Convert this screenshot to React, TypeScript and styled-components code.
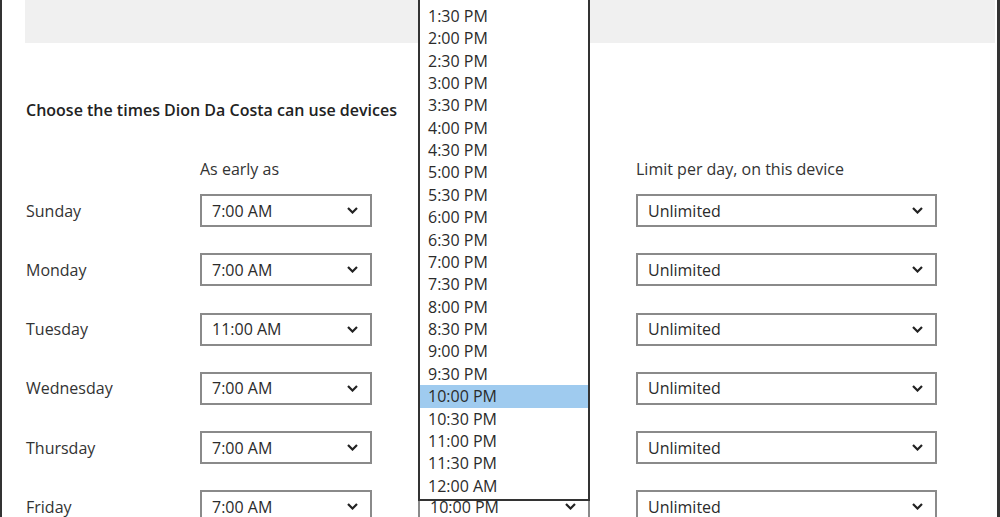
import React from "react";
import styled, { createGlobalStyle } from "styled-components";

const Global = createGlobalStyle`
  html, body { margin: 0; padding: 0; background: #fff; }
  body { font-family: "Open Sans", "Noto Sans", "Liberation Sans", sans-serif; color: #2b2b2b; }
  * { box-sizing: border-box; }
`;

const Frame = styled.div`
  position: relative;
  width: 1000px;
  height: 517px;
  overflow: hidden;
  border-left: 2px solid #333;
  border-right: 3px solid #333;
  background: #fff;
`;

const Band = styled.div`
  margin-left: 23px;
  margin-right: 2px;
  height: 43px;
  background: #f0f0f0;
`;

const Content = styled.div`
  padding-left: 24px;
`;

const Title = styled.h2`
  margin: 57px 0 0 0;
  font-size: 16px;
  line-height: 20px;
  font-weight: 600;
  color: #222;
`;

const Grid = styled.div<{ $gapBelow: number; $h: number; $gapAbove?: number }>`
  display: grid;
  grid-template-columns: 128px 172px 172px 301px;
  column-gap: 46px;
  align-items: center;
  height: ${(p) => p.$h}px;
  margin-top: ${(p) => p.$gapAbove ?? 0}px;
  margin-bottom: ${(p) => p.$gapBelow}px;
`;

const ColLabel = styled.div`
  font-size: 16px;
  line-height: 20px;
  color: #333;
  white-space: nowrap;
`;

const Day = styled.div`
  font-size: 16px;
  line-height: 20px;
  color: #333;
`;

const SelectBox = styled.div`
  display: flex;
  align-items: center;
  justify-content: space-between;
  height: 33px;
  border: 2px solid #8a8a8a;
  background: #fff;
  padding: 0 12px 0 10px;
  font-size: 16px;
  color: #2b2b2b;
`;

const Chevron = () => (
  <svg width="11" height="7" viewBox="0 0 11 7">
    <polyline points="1,1 5.5,5.5 10,1" fill="none" stroke="#222" strokeWidth="2.2" />
  </svg>
);

const ListBox = styled.div`
  position: absolute;
  left: 416px;
  top: -10px;
  width: 172px;
  height: 511px;
  border: 2px solid #333;
  background: #fff;
  padding-top: 12.8px;
  overflow: hidden;
`;

const Item = styled.div<{ $selected?: boolean }>`
  height: 22.38px;
  line-height: 22.38px;
  padding-left: 8px;
  font-size: 16px;
  color: #2b2b2b;
  background: ${(p) => (p.$selected ? "#9fcbef" : "transparent")};
`;

const rows = [
  { day: "Sunday", early: "7:00 AM" },
  { day: "Monday", early: "7:00 AM" },
  { day: "Tuesday", early: "11:00 AM" },
  { day: "Wednesday", early: "7:00 AM" },
  { day: "Thursday", early: "7:00 AM" },
  { day: "Friday", early: "7:00 AM", late: "10:00 PM" },
];

const times = [
  "1:30 PM", "2:00 PM", "2:30 PM", "3:00 PM", "3:30 PM", "4:00 PM", "4:30 PM",
  "5:00 PM", "5:30 PM", "6:00 PM", "6:30 PM", "7:00 PM", "7:30 PM", "8:00 PM",
  "8:30 PM", "9:00 PM", "9:30 PM", "10:00 PM", "10:30 PM", "11:00 PM",
  "11:30 PM", "12:00 AM",
];

export default function App() {
  return (
    <>
      <Global />
      <Frame>
        <Band />
        <Content>
          <Title>Choose the times Dion Da Costa can use devices</Title>
          <Grid $h={20} $gapBelow={15} $gapAbove={39}>
            <span />
            <ColLabel>As early as</ColLabel>
            <span />
            <ColLabel>Limit per day, on this device</ColLabel>
          </Grid>
          {rows.map((r) => (
            <Grid key={r.day} $h={33} $gapBelow={26.25}>
              <Day>{r.day}</Day>
              <SelectBox>
                <span>{r.early}</span>
                <Chevron />
              </SelectBox>
              <SelectBox>
                <span>{r.late ?? ""}</span>
                <Chevron />
              </SelectBox>
              <SelectBox>
                <span>Unlimited</span>
                <Chevron />
              </SelectBox>
            </Grid>
          ))}
        </Content>
        <ListBox>
          {times.map((t) => (
            <Item key={t} $selected={t === "10:00 PM"}>
              {t}
            </Item>
          ))}
        </ListBox>
      </Frame>
    </>
  );
}
